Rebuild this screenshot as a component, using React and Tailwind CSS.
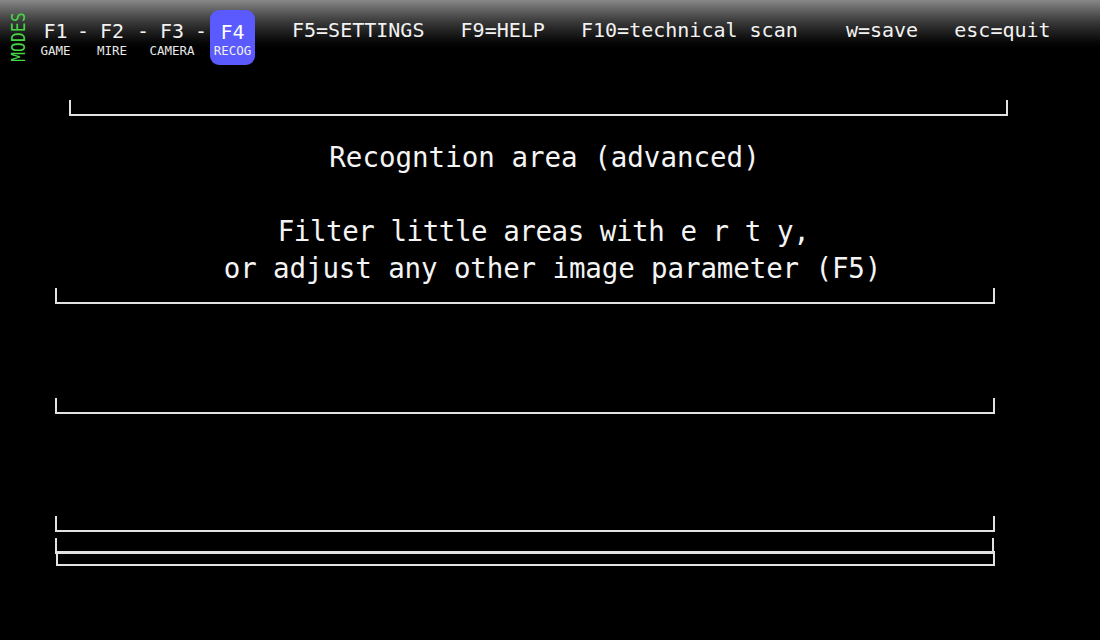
import React from "react";

const mono = { fontFamily: '"DejaVu Sans Mono", "Liberation Mono", monospace' };

function Bracket({ className }) {
  return (
    <div
      className={`border-l-2 border-r-2 border-b-2 border-[#e2e2e2] h-[16px] ${className}`}
    />
  );
}

function ModeKey({ k, label, w }) {
  return (
    <div className={`flex flex-col items-center pt-[11px] ${w}`}>
      <div className="text-[20px] leading-[20px] text-[#f2f2f2]">{k}</div>
      <div className="mt-[4px] text-[12.5px] leading-[12.5px] text-[#e8e8e8] whitespace-nowrap">
        {label}
      </div>
    </div>
  );
}

function Dash({ w }) {
  return (
    <div className={`pt-[11px] text-center text-[20px] leading-[20px] text-[#f2f2f2] ${w}`}>-</div>
  );
}

export default function App() {
  return (
    <div className="w-[1100px] h-[640px] bg-black overflow-hidden flex flex-col" style={mono}>
      <div className="h-[70px] flex items-start bg-linear-to-b from-[#888888] from-0% via-[#3c3c3c] via-30% to-black to-78%">
        <div className="w-[35px] h-[74px] flex items-center justify-center pl-[3px]">
          <span className="inline-block -rotate-90 scale-y-[1.2] text-[16px] leading-[16px] tracking-[0.3px] text-[#46d646]">
            MODES
          </span>
        </div>
        <div className="flex items-start mt-[10px]">
          <ModeKey k="F1" label="GAME" w="w-[41px]" />
          <Dash w="w-[14px]" />
          <ModeKey k="F2" label="MIRE" w="w-[44px]" />
          <Dash w="w-[18px]" />
          <ModeKey k="F3" label="CAMERA" w="w-[40px]" />
          <Dash w="w-[18px]" />
          <div className="w-[45px] h-[55px] rounded-[9px] bg-[#5a5aff] flex flex-col items-center pt-[12px]">
            <div className="text-[20px] leading-[20px] text-white">F4</div>
            <div className="mt-[3px] text-[12.5px] leading-[12.5px] text-[#f0f0f0]">RECOG</div>
          </div>
        </div>
        <div className="ml-[37px] mt-[20px] text-[20px] leading-[20px] text-[#f2f2f2] whitespace-pre">
          {"F5=SETTINGS   F9=HELP   F10=technical scan    w=save   esc=quit"}
        </div>
      </div>

      <Bracket className="mt-[30px] ml-[69px] w-[939px]" />

      <div className="mt-[23px] text-[27.5px] leading-[37px] text-[#f4f4f4] whitespace-pre">
        <div className="text-center pr-[11px]">Recogntion area (advanced)</div>
        <div className="h-[37px]" />
        <div className="text-center pr-[13px] tracking-[-0.45px]">Filter little areas with e r t y,</div>
        <div className="text-center pl-[5px] tracking-[-0.12px]">or adjust any other image parameter (F5)</div>
      </div>

      <Bracket className="mt-[1px] ml-[55px] w-[940px]" />
      <Bracket className="mt-[94px] ml-[55px] w-[940px]" />
      <Bracket className="mt-[102px] ml-[55px] w-[940px]" />
      <Bracket className="mt-[6px] ml-[55px] w-[939px]" />
      <div className="mt-[-3px] ml-[56px] w-[939px] h-[15px] border-2 border-[#e2e2e2]" />
    </div>
  );
}
